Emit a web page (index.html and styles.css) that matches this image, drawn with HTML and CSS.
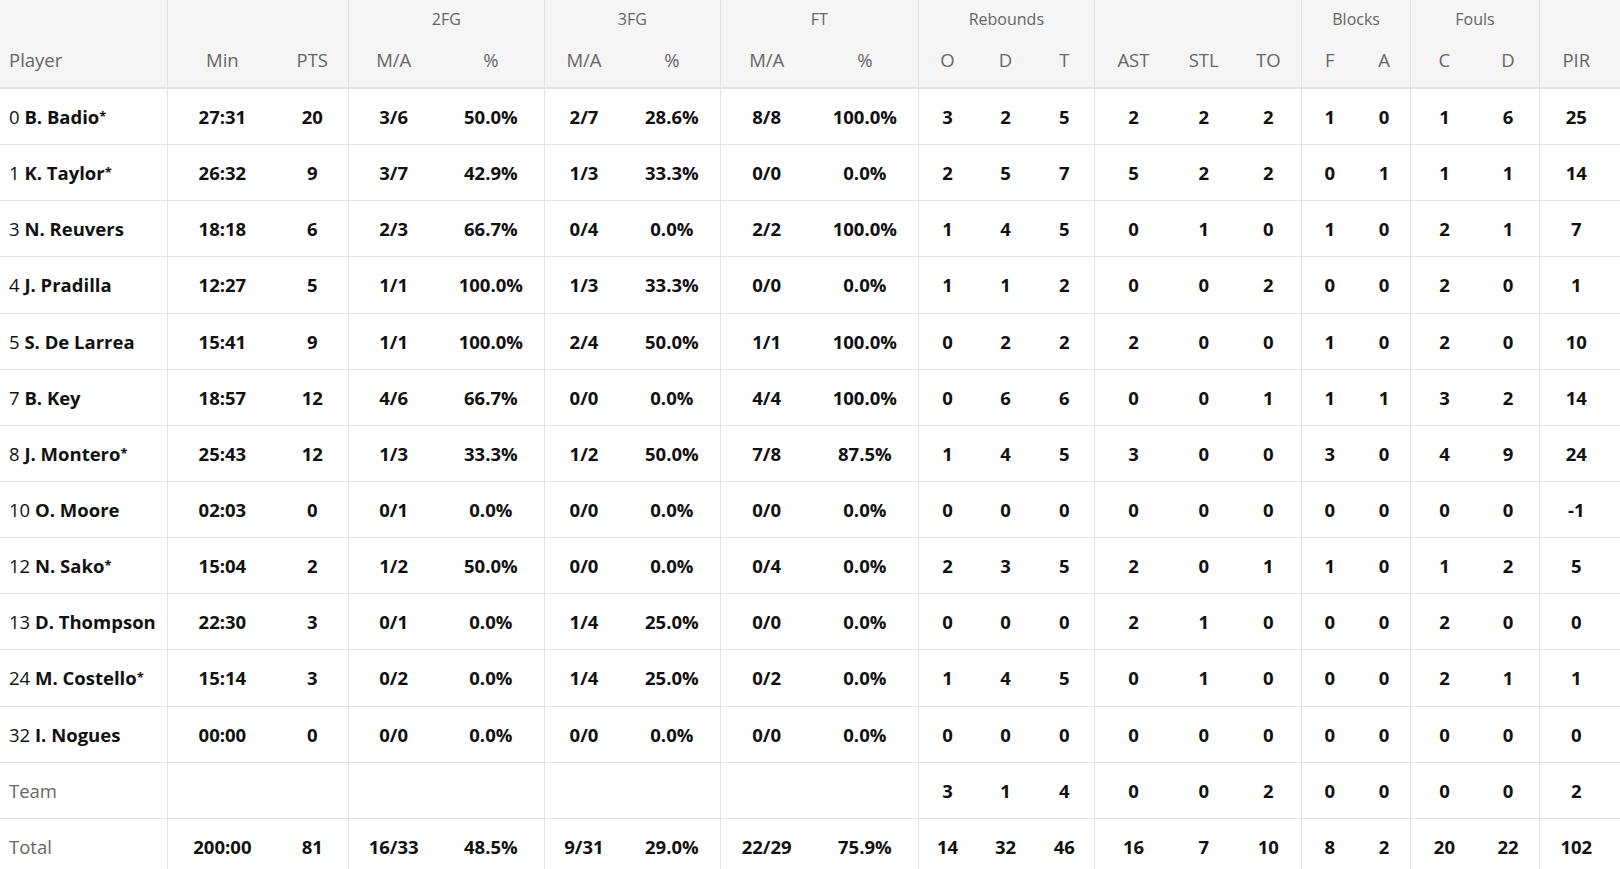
FILE: index.html
```html
<!DOCTYPE html>
<html lang="en">
<head>
<meta charset="utf-8">
<title>Box score</title>
<link rel="stylesheet" href="styles.css">
</head>
<body>
<table class="box">
  <colgroup>
    <col class="c-player"><col class="c-min"><col class="c-pts">
    <col class="c-2ma"><col class="c-2p">
    <col class="c-3ma"><col class="c-3p">
    <col class="c-fma"><col class="c-fp">
    <col class="c-ro"><col class="c-rd"><col class="c-rt">
    <col class="c-ast"><col class="c-stl"><col class="c-to">
    <col class="c-bf"><col class="c-ba">
    <col class="c-fc"><col class="c-fd">
    <col class="c-pir">
  </colgroup>
  <thead>
    <tr class="groups">
      <th class="sep"></th>
      <th colspan="2" class="sep"></th>
      <th colspan="2" class="sep">2FG</th>
      <th colspan="2" class="sep">3FG</th>
      <th colspan="2" class="sep">FT</th>
      <th colspan="3" class="sep">Rebounds</th>
      <th colspan="3" class="sep"></th>
      <th colspan="2" class="sep">Blocks</th>
      <th colspan="2" class="sep">Fouls</th>
      <th class="last"></th>
    </tr>
    <tr class="labels">
      <th class="player sep">Player</th>
      <th>Min</th><th class="sep">PTS</th>
      <th>M/A</th><th class="sep">%</th>
      <th>M/A</th><th class="sep">%</th>
      <th>M/A</th><th class="sep">%</th>
      <th>O</th><th>D</th><th class="sep">T</th>
      <th>AST</th><th>STL</th><th class="sep">TO</th>
      <th>F</th><th class="sep">A</th>
      <th>C</th><th class="sep">D</th>
      <th class="last">PIR</th>
    </tr>
  </thead>
  <tbody>
    <tr><td class="player sep"><span class="num">0</span> <b>B. Badio<span class="star">*</span></b></td><td>27:31</td><td class="sep">20</td><td>3/6</td><td class="sep">50.0%</td><td>2/7</td><td class="sep">28.6%</td><td>8/8</td><td class="sep">100.0%</td><td>3</td><td>2</td><td class="sep">5</td><td>2</td><td>2</td><td class="sep">2</td><td>1</td><td class="sep">0</td><td>1</td><td class="sep">6</td><td class="last">25</td></tr>
    <tr><td class="player sep"><span class="num">1</span> <b>K. Taylor<span class="star">*</span></b></td><td>26:32</td><td class="sep">9</td><td>3/7</td><td class="sep">42.9%</td><td>1/3</td><td class="sep">33.3%</td><td>0/0</td><td class="sep">0.0%</td><td>2</td><td>5</td><td class="sep">7</td><td>5</td><td>2</td><td class="sep">2</td><td>0</td><td class="sep">1</td><td>1</td><td class="sep">1</td><td class="last">14</td></tr>
    <tr><td class="player sep"><span class="num">3</span> <b>N. Reuvers</b></td><td>18:18</td><td class="sep">6</td><td>2/3</td><td class="sep">66.7%</td><td>0/4</td><td class="sep">0.0%</td><td>2/2</td><td class="sep">100.0%</td><td>1</td><td>4</td><td class="sep">5</td><td>0</td><td>1</td><td class="sep">0</td><td>1</td><td class="sep">0</td><td>2</td><td class="sep">1</td><td class="last">7</td></tr>
    <tr><td class="player sep"><span class="num">4</span> <b>J. Pradilla</b></td><td>12:27</td><td class="sep">5</td><td>1/1</td><td class="sep">100.0%</td><td>1/3</td><td class="sep">33.3%</td><td>0/0</td><td class="sep">0.0%</td><td>1</td><td>1</td><td class="sep">2</td><td>0</td><td>0</td><td class="sep">2</td><td>0</td><td class="sep">0</td><td>2</td><td class="sep">0</td><td class="last">1</td></tr>
    <tr><td class="player sep"><span class="num">5</span> <b>S. De Larrea</b></td><td>15:41</td><td class="sep">9</td><td>1/1</td><td class="sep">100.0%</td><td>2/4</td><td class="sep">50.0%</td><td>1/1</td><td class="sep">100.0%</td><td>0</td><td>2</td><td class="sep">2</td><td>2</td><td>0</td><td class="sep">0</td><td>1</td><td class="sep">0</td><td>2</td><td class="sep">0</td><td class="last">10</td></tr>
    <tr><td class="player sep"><span class="num">7</span> <b>B. Key</b></td><td>18:57</td><td class="sep">12</td><td>4/6</td><td class="sep">66.7%</td><td>0/0</td><td class="sep">0.0%</td><td>4/4</td><td class="sep">100.0%</td><td>0</td><td>6</td><td class="sep">6</td><td>0</td><td>0</td><td class="sep">1</td><td>1</td><td class="sep">1</td><td>3</td><td class="sep">2</td><td class="last">14</td></tr>
    <tr><td class="player sep"><span class="num">8</span> <b>J. Montero<span class="star">*</span></b></td><td>25:43</td><td class="sep">12</td><td>1/3</td><td class="sep">33.3%</td><td>1/2</td><td class="sep">50.0%</td><td>7/8</td><td class="sep">87.5%</td><td>1</td><td>4</td><td class="sep">5</td><td>3</td><td>0</td><td class="sep">0</td><td>3</td><td class="sep">0</td><td>4</td><td class="sep">9</td><td class="last">24</td></tr>
    <tr><td class="player sep"><span class="num">10</span> <b>O. Moore</b></td><td>02:03</td><td class="sep">0</td><td>0/1</td><td class="sep">0.0%</td><td>0/0</td><td class="sep">0.0%</td><td>0/0</td><td class="sep">0.0%</td><td>0</td><td>0</td><td class="sep">0</td><td>0</td><td>0</td><td class="sep">0</td><td>0</td><td class="sep">0</td><td>0</td><td class="sep">0</td><td class="last">-1</td></tr>
    <tr><td class="player sep"><span class="num">12</span> <b>N. Sako<span class="star">*</span></b></td><td>15:04</td><td class="sep">2</td><td>1/2</td><td class="sep">50.0%</td><td>0/0</td><td class="sep">0.0%</td><td>0/4</td><td class="sep">0.0%</td><td>2</td><td>3</td><td class="sep">5</td><td>2</td><td>0</td><td class="sep">1</td><td>1</td><td class="sep">0</td><td>1</td><td class="sep">2</td><td class="last">5</td></tr>
    <tr><td class="player sep"><span class="num">13</span> <b>D. Thompson</b></td><td>22:30</td><td class="sep">3</td><td>0/1</td><td class="sep">0.0%</td><td>1/4</td><td class="sep">25.0%</td><td>0/0</td><td class="sep">0.0%</td><td>0</td><td>0</td><td class="sep">0</td><td>2</td><td>1</td><td class="sep">0</td><td>0</td><td class="sep">0</td><td>2</td><td class="sep">0</td><td class="last">0</td></tr>
    <tr><td class="player sep"><span class="num">24</span> <b>M. Costello<span class="star">*</span></b></td><td>15:14</td><td class="sep">3</td><td>0/2</td><td class="sep">0.0%</td><td>1/4</td><td class="sep">25.0%</td><td>0/2</td><td class="sep">0.0%</td><td>1</td><td>4</td><td class="sep">5</td><td>0</td><td>1</td><td class="sep">0</td><td>0</td><td class="sep">0</td><td>2</td><td class="sep">1</td><td class="last">1</td></tr>
    <tr><td class="player sep"><span class="num">32</span> <b>I. Nogues</b></td><td>00:00</td><td class="sep">0</td><td>0/0</td><td class="sep">0.0%</td><td>0/0</td><td class="sep">0.0%</td><td>0/0</td><td class="sep">0.0%</td><td>0</td><td>0</td><td class="sep">0</td><td>0</td><td>0</td><td class="sep">0</td><td>0</td><td class="sep">0</td><td>0</td><td class="sep">0</td><td class="last">0</td></tr>
    <tr><td class="player label sep">Team</td><td></td><td class="sep"></td><td></td><td class="sep"></td><td></td><td class="sep"></td><td></td><td class="sep"></td><td>3</td><td>1</td><td class="sep">4</td><td>0</td><td>0</td><td class="sep">2</td><td>0</td><td class="sep">0</td><td>0</td><td class="sep">0</td><td class="last">2</td></tr>
    <tr><td class="player label sep">Total</td><td>200:00</td><td class="sep">81</td><td>16/33</td><td class="sep">48.5%</td><td>9/31</td><td class="sep">29.0%</td><td>22/29</td><td class="sep">75.9%</td><td>14</td><td>32</td><td class="sep">46</td><td>16</td><td>7</td><td class="sep">10</td><td>8</td><td class="sep">2</td><td>20</td><td class="sep">22</td><td class="last">102</td></tr>
  </tbody>
</table>
</body>
</html>
```

FILE: styles.css
```css
html, body {
  margin: 0;
  padding: 0;
  overflow: hidden;
  background: #ffffff;
}

body {
  font-family: "Open Sans", Lato, "Liberation Sans", sans-serif;
  color: #111111;
}

.box {
  width: 1620px;
  table-layout: fixed;
  border-collapse: separate;
  border-spacing: 0;
}

.c-player { width: 168.4px; }
.c-min { width: 108px; }
.c-pts { width: 72.8px; }
.c-2ma { width: 89px; }
.c-2p { width: 106.3px; }
.c-3ma { width: 79px; }
.c-3p { width: 97.7px; }
.c-fma { width: 91px; }
.c-fp { width: 106.3px; }
.c-ro { width: 58px; }
.c-rd { width: 58px; }
.c-rt { width: 60.7px; }
.c-ast { width: 76.5px; }
.c-stl { width: 64px; }
.c-to { width: 66.1px; }
.c-bf { width: 56px; }
.c-ba { width: 53.6px; }
.c-fc { width: 66px; }
.c-fd { width: 62.1px; }
.c-pir { width: 80.5px; }

.box th,
.box td {
  padding: 0;
  text-align: center;
  white-space: nowrap;
  overflow: hidden;
}

.box thead th {
  background: #f5f5f5;
  color: #666666;
  font-weight: 400;
}

.groups th {
  height: 39px;
  box-sizing: border-box;
  padding-bottom: 2px;
  font-size: 16px;
  vertical-align: middle;
}

.labels th {
  height: 50px;
  box-sizing: border-box;
  font-size: 18.5px;
  vertical-align: middle;
  padding-bottom: 8px;
  border-bottom: 2px solid #e2e2e2;
}

.box td {
  height: 55.15px;
  font-size: 18.5px;
  font-weight: 700;
  vertical-align: middle;
  border-bottom: 1px solid #e3e3e3;
}

.box .sep {
  border-right: 1px solid #e3e3e3;
}

.box .player {
  text-align: left;
  padding-left: 9px;
}

.box .last {
  padding-right: 7px;
}

.num {
  font-weight: 400;
}

.player b {
  font-weight: 700;
}

.star {
  font-size: 13px;
  vertical-align: 3px;
}

.box td.label {
  font-weight: 400;
  color: #666666;
}
```
